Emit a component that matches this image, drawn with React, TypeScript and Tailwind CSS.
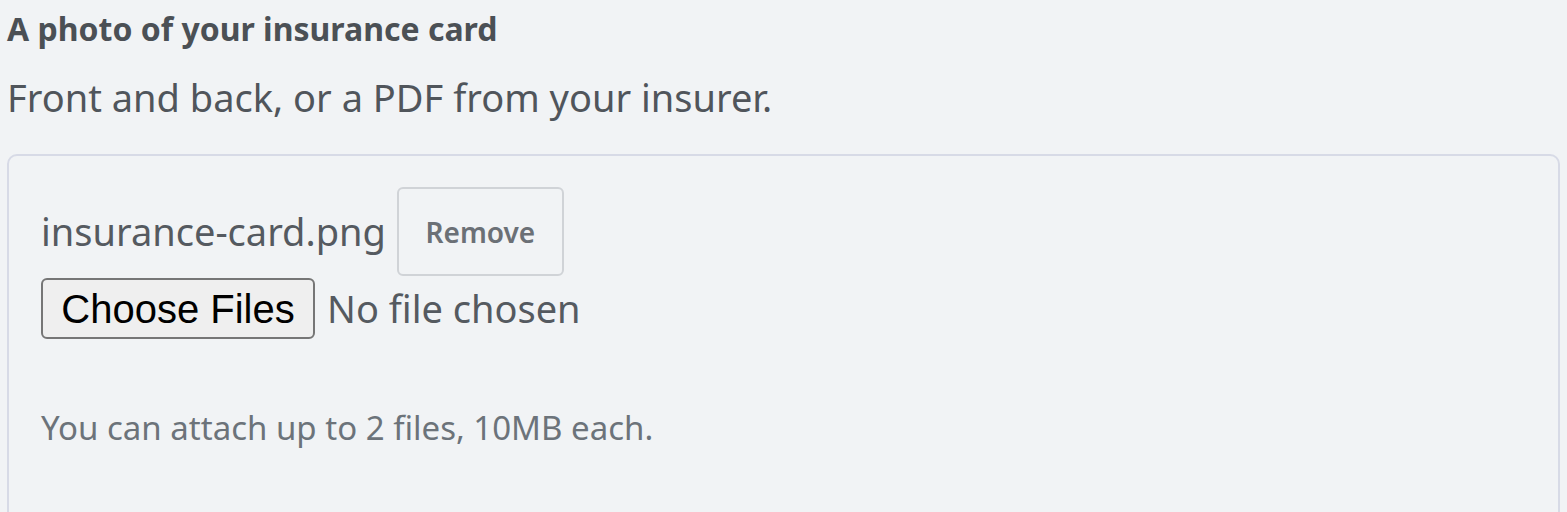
export default function App() {
  return (
    <div className="h-[512px] overflow-hidden bg-[#f1f3f5] px-[7px] pt-[9px] font-['Noto_Sans',sans-serif]">
      <h2 className="text-[32px] font-bold leading-[40px] text-[#4b5055]">A photo of your insurance card</h2>
      <p className="mt-[26px] text-[38px] leading-[44px] text-[#50555b]">Front and back, or a PDF from your insurer.</p>

      <div className="mt-[35px] h-[400px] rounded-[10px] border-2 border-[#d7dae6] px-[32px] pt-[31px]">
        <div className="flex items-center gap-[11px]">
          <span className="text-[38px] text-[#555a60]">insurance-card.png</span>
          <button className="h-[89px] w-[167px] rounded-[6px] border-2 border-[#d0d3d7] text-[28px] font-semibold text-[#6b7076]">
            Remove
          </button>
        </div>
        <div className="mt-[2px] flex items-center gap-[12px]">
          <span className="flex h-[61px] w-[274px] items-center justify-center rounded-[6px] border-2 border-[#767676] bg-[#efefef] font-['Liberation_Sans',sans-serif] text-[40px] text-black">
            Choose Files
          </span>
          <span className="text-[38px] text-[#555a60]">No file chosen</span>
        </div>
        <p className="mt-[66px] text-[33px] leading-[45px] text-[#6c737a]">You can attach up to 2 files, 10MB each.</p>
      </div>
    </div>
  );
}
